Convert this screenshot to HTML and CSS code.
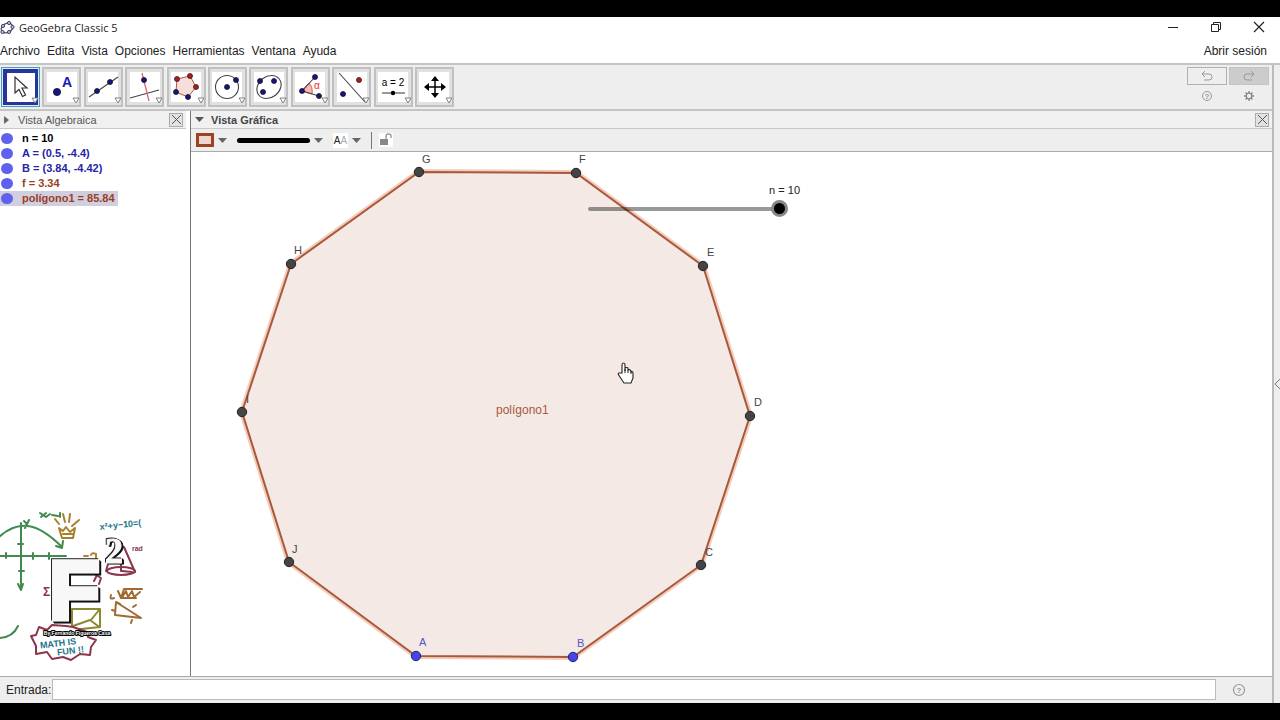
FILE: index.html
```html
<!DOCTYPE html>
<html lang="es">
<head>
<meta charset="utf-8">
<title>GeoGebra Classic 5</title>
<link rel="stylesheet" href="styles.css">
</head>
<body>
<div class="window">
  <header class="titlebar">
    <svg class="app-icon" width="16" height="16" viewBox="0 0 16 16"><ellipse cx="7" cy="8" rx="6" ry="4.600" transform="rotate(-25 7 8)" fill="none" stroke="#555" stroke-width="1.300"/><g fill="#b9b9ee" stroke="#336" stroke-width=".9"><circle cx="3" cy="6" r="1.600"/><circle cx="9" cy="3" r="1.600"/><circle cx="12.500" cy="7" r="1.600"/><circle cx="9" cy="12" r="1.600"/><circle cx="2.500" cy="12" r="1.600"/></g></svg>
    <h1 class="title">GeoGebra Classic 5</h1>
    <div class="window-controls">
      <button class="plain" aria-label="Minimizar"><svg width="12" height="12"><path d="M1 6.500h10" stroke="#222"/></svg></button>
      <button class="plain" aria-label="Restaurar"><svg width="12" height="12" fill="none" stroke="#222"><path d="M1.500 3.500h7v7h-7zM3.500 3.500v-2h7v7h-2"/></svg></button>
      <button class="plain" aria-label="Cerrar"><svg width="12" height="12"><path d="M1 1l10 10M11 1L1 11" stroke="#222" stroke-width="1.200"/></svg></button>
    </div>
  </header>
  <nav class="menubar">
    <button class="plain">Archivo</button><button class="plain">Edita</button><button class="plain">Vista</button><button class="plain">Opciones</button><button class="plain">Herramientas</button><button class="plain">Ventana</button><button class="plain">Ayuda</button>
    <button class="plain sign-in">Abrir sesión</button>
  </nav>
  <div class="workspace">
    <div class="app">
      <div class="toolbar">
        <div class="tools">
          <button class="tool selected" aria-label="Elige y mueve"><svg viewBox="0 0 39 40"><path d="M14 10v16l4-3.500 3.500 7 3-1.500-3.500-7h5z" fill="#fff" stroke="#333" stroke-width="1.200"/><path class="more" d="M31 31h6l-3 5z"/></svg></button>
          <button class="tool" aria-label="Punto"><svg viewBox="0 0 39 40"><circle class="pt" cx="15" cy="25" r="3.600"/><text x="25" y="20" class="tool-letter">A</text><path class="more" d="M31 31h6l-3 5z"/></svg></button>
          <button class="tool" aria-label="Recta"><svg viewBox="0 0 39 40"><path class="ln" d="M5 30L34 10"/><circle class="pt" cx="13" cy="24" r="2.500"/><circle class="pt" cx="26" cy="15" r="2.500"/><path class="more" d="M31 31h6l-3 5z"/></svg></button>
          <button class="tool" aria-label="Perpendicular"><svg viewBox="0 0 39 40"><path class="ln" d="M5 31L34 23"/><path d="M17 6l7 28" stroke="#d66" stroke-width="1.300"/><circle class="pt" cx="19" cy="13" r="2.500"/><path class="more" d="M31 31h6l-3 5z"/></svg></button>
          <button class="tool" aria-label="Polígono"><svg viewBox="0 0 39 40"><path d="M10 12l13-3 6 11-8 10-12-5z" fill="#f6dfda" stroke="#a55a43"/><g class="red"><circle cx="10" cy="12" r="2.500"/><circle cx="23" cy="9" r="2.500"/><circle cx="29" cy="20" r="2.500"/></g><circle class="pt" cx="21" cy="30" r="2.500"/><circle class="pt" cx="9" cy="25" r="2.500"/><path class="more" d="M31 31h6l-3 5z"/></svg></button>
          <button class="tool" aria-label="Circunferencia"><svg viewBox="0 0 39 40"><circle class="ln" cx="19" cy="20" r="11.500"/><circle class="pt" cx="19" cy="20" r="2.500"/><circle class="pt" cx="28" cy="13" r="2.500"/><path class="more" d="M31 31h6l-3 5z"/></svg></button>
          <button class="tool" aria-label="Elipse"><svg viewBox="0 0 39 40"><ellipse class="ln" cx="20" cy="20" rx="13" ry="10.500" transform="rotate(-38 20 20)"/><circle class="pt" cx="11" cy="14" r="2.500"/><circle class="pt" cx="25" cy="14" r="2.500"/><circle class="pt" cx="14" cy="25" r="2.500"/><path class="more" d="M31 31h6l-3 5z"/></svg></button>
          <button class="tool" aria-label="Ángulo"><svg viewBox="0 0 39 40"><path d="M11 24l7-8q4 4 3 11z" fill="#f8b8b8" stroke="#d55"/><path class="ln" d="M24 10L11 24l17 5"/><circle class="pt" cx="24" cy="10" r="2.500"/><circle class="pt" cx="11" cy="24" r="2.500"/><circle class="pt" cx="28" cy="29" r="2.500"/><text x="26" y="22" class="tool-angle">α</text><path class="more" d="M31 31h6l-3 5z"/></svg></button>
          <button class="tool" aria-label="Simetría"><svg viewBox="0 0 39 40"><path class="ln" d="M7 6l26 29"/><g class="red"><circle cx="27" cy="13" r="2.500"/></g><circle class="pt" cx="11" cy="27" r="2.500"/><path class="more" d="M31 31h6l-3 5z"/></svg></button>
          <button class="tool" aria-label="Deslizador"><svg viewBox="0 0 39 40"><text x="19" y="19" class="tool-value">a = 2</text><path class="ln" d="M8 26h23"/><circle cx="19" cy="26" r="2.200"/><path class="more" d="M31 31h6l-3 5z"/></svg></button>
          <button class="tool" aria-label="Desplaza vista gráfica"><svg viewBox="0 0 39 40"><path d="M20 12v16M12 20h16" stroke="#000" stroke-width="1.500"/><path d="M20 9l4 5h-8zM20 31l4-5h-8zM9 20l5-4v8zM31 20l-5-4v8z"/><path class="more" d="M31 31h6l-3 5z"/></svg></button>
        </div>
        <div class="actions">
          <button class="undo" aria-label="Deshace"><svg width="12" height="10"><path d="M4 0L1 3l3 3M1 3h7q3 0 3 3T8 9H3" fill="none" stroke="#999"/></svg></button>
          <button class="undo redo" aria-label="Rehace"><svg width="12" height="10"><path d="M8 0l3 3-3 3M11 3H4Q1 3 1 6t3 3h5" fill="none" stroke="#999"/></svg></button>
          <button class="plain" aria-label="Ayuda"><svg width="12" height="12"><circle cx="6" cy="6" r="4.500" fill="none" stroke="#999"/><text x="6" y="9" class="help-mark">?</text></svg></button>
          <button class="plain" aria-label="Configuración"><svg width="12" height="12" fill="none" stroke="#888"><circle cx="6" cy="6" r="2.800" stroke-width="1.300"/><path d="M6 1v2M6 9v2M1 6h2M9 6h2M2.500 2.500l1.500 1.500M8 8l1.500 1.500M9.500 2.500L8 4M4 8l-1.500 1.500" stroke-width="1.300"/></svg></button>
        </div>
      </div>
      <div class="views">
        <section class="algebra">
          <header class="view-header">
            <svg width="16" height="10"><path d="M4 1v8l5-4z" fill="#666"/></svg>
            <h2 class="view-title muted">Vista Algebraica</h2>
            <button class="close" aria-label="Cerrar"><svg width="11" height="11"><path d="M1 1l9 9M10 1l-9 9" stroke="#555"/></svg></button>
          </header>
          <ul class="objects">
            <li><span class="dot"></span><span class="value">n = 10</span></li>
            <li class="blue"><span class="dot"></span><span class="value">A = (0.5, -4.4)</span></li>
            <li class="blue"><span class="dot"></span><span class="value">B = (3.84, -4.42)</span></li>
            <li class="brown"><span class="dot"></span><span class="value">f = 3.34</span></li>
            <li class="brown current"><span class="dot"></span><span class="value">polígono1 = 85.84</span></li>
          </ul>
          <svg class="logo" width="146" height="152" viewBox="0 510 146 152" fill="none" stroke-linecap="round" stroke-linejoin="round">
            <g stroke="#438a50" stroke-width="2">
              <path d="M21 523v64M0 556h66M-1 537Q13 524 28 526T62 547M56 546l6 2 1-7M18 584l3 6 2-6M18 544h5M19 571h5M6 553v5M33 553v6M49 553v6M0 638q13-1 18-12M24 521l3 3 2-4M27 524l-2 4M40 513l6 4 4-3M46 513l-5 4M52 515l6 1M60 513v4"/>
            </g>
            <path d="M59 528l3 10h11l2-10-5 4-4-5-3 4zM63 534h10M55 519l4 5M63 514l2 8M70 514l-1 8M79 520l-7 6" stroke="#a7802e" stroke-width="2"/>
            <text x="100" y="530" transform="rotate(-6 100 530)" class="teal">x²+y−10=(</text>
            <path d="M108 564l-2 7M124 547l11 25M121 563v8M122 571l10 1" stroke="#8d354c" stroke-width="2"/>
            <ellipse cx="121" cy="571" rx="14" ry="4" stroke="#8d354c" stroke-width="2"/>
            <text x="132" y="551" class="scrawl-small maroon">rad</text>
            <text x="43" y="596" class="scrawl maroon">Σ</text>
            <path d="M84 556h4M91 555q1-3 5-1v4" stroke="#b8822c" stroke-width="2"/>
            <path d="M96 575l5 3-2 6M96 577l-2 4" stroke="#8d354c" stroke-width="2"/>
            <path d="M72 609h28v18l-28 3zM91 620l8-10M90 620l8 6M90 620l-17 6" stroke="#8c8831" stroke-width="2"/>
            <path d="M111 595q-2 5 3 3M118 591l3 7 3-9h18M123 596l3-5 2 6 4-6 2 6 6-5M122 598h14M116 602l-1 13 26 3zM116 602l4 2M112 610l3 1M132 620l-1 3M133 607l3-2" stroke="#a06a31" stroke-width="2"/>
            <path d="M52 625l-5 5-8-3-3 8-5 1 5 10 0 8 11-2 5 7 11-2 8 3 9-6 10 1 1-8 5-7-8-3-1-5-14-5-7-1z" fill="#fff" stroke="#8d354c" stroke-width="2"/>
            <g transform="rotate(-7 61 644)"><text x="40" y="646" class="teal">MATH IS</text><text x="56" y="655" class="teal">FUN !!</text></g>
            <text x="49" y="619" class="logo-f">F</text>
            <text x="105" y="563" class="logo-two">2</text>
            <text x="77" y="635" class="credit">By Fernando Figueroa Casa</text>
          </svg>
        </section>
        <section class="graphics">
          <header class="view-header">
            <svg width="18" height="10"><path d="M2 2h9L6.500 7z" fill="#555"/></svg>
            <h2 class="view-title">Vista Gráfica</h2>
            <button class="close" aria-label="Cerrar"><svg width="11" height="11"><path d="M1 1l9 9M10 1l-9 9" stroke="#555"/></svg></button>
          </header>
          <div class="stylebar">
            <button class="plain pair" aria-label="Color"><span class="swatch"></span><svg width="9" height="5"><path d="M0 0h9L4.500 5z" fill="#666"/></svg></button>
            <button class="plain pair" aria-label="Estilo de trazo"><span class="stroke"></span><svg width="9" height="5"><path d="M0 0h9L4.500 5z" fill="#666"/></svg></button>
            <button class="plain pair" aria-label="Tamaño de texto"><span class="letters">A<i>A</i></span><svg width="9" height="5"><path d="M0 0h9L4.500 5z" fill="#666"/></svg></button>
            <span class="divider"></span>
            <button class="plain lock" aria-label="Fijar objeto"><svg width="14" height="14"><path d="M1 6h8v6H1z" fill="#888"/><path d="M7 6V3q0-2 2.500-2T12 3v2" fill="none" stroke="#999" stroke-width="1.400"/></svg></button>
          </div>
          <div class="canvas">
            <svg class="drawing" role="img" aria-label="Polígono regular de diez lados">
              <g transform="translate(-191 -152)">
                <path class="halo" d="M419 172L576 173 703 266 750 416 701 565 573 657 416 656 289 562 242 412 291 264z"/>
                <path class="polygon" d="M419 172L576 173 703 266 750 416 701 565 573 657 416 656 289 562 242 412 291 264z"/>
                <g class="names">
                  <text x="422" y="163">G</text><text x="579" y="163">F</text><text x="707" y="256">E</text><text x="754" y="406">D</text><text x="705" y="556">C</text><text x="292" y="553">J</text><text x="246" y="403">I</text><text x="294" y="254">H</text>
                  <g class="blue"><text x="419" y="646">A</text><text x="577" y="647">B</text></g>
                </g>
                <text class="poly-name" x="496" y="414">polígono1</text>
                <g class="vertices">
                  <circle cx="419" cy="172" r="4.700"/><circle cx="576" cy="173" r="4.700"/><circle cx="703" cy="266" r="4.700"/><circle cx="750" cy="416" r="4.700"/><circle cx="701" cy="565" r="4.700"/><circle cx="289" cy="562" r="4.700"/><circle cx="242" cy="412" r="4.700"/><circle cx="291" cy="264" r="4.700"/>
                  <circle class="free" cx="573" cy="657" r="4.700"/><circle class="free" cx="416" cy="656" r="4.700"/>
                </g>
                <path d="M622 373V365q0-2 1.500-2t1.500 2v6-3q2-1 3 0v2q2-1 3 1v1q2-1 2 1v5l-2 5h-7l-4-6q-3-4-1-4z" fill="#fff" stroke="#222" stroke-width="1.100"/><path d="M628 370v3M631 371v3M625 369v4" stroke="#222"/>
              </g>
            </svg>
            <div class="slider">
              <label for="n">n = 10</label>
              <input id="n" type="range" min="3" max="10" value="10">
            </div>
          </div>
        </section>
      </div>
      <form class="inputbar">
        <label for="entry">Entrada:</label>
        <input id="entry" type="text" autocomplete="off">
        <button type="button" class="plain" aria-label="Ayuda de entrada"><svg width="14" height="14"><circle cx="7" cy="7" r="5.500" fill="none" stroke="#999" stroke-width="1.200"/><text x="7" y="10" class="help-mark">?</text></svg></button>
      </form>
    </div>
    <aside class="sidebar"><button class="plain" aria-label="Abrir panel"><svg width="6" height="12"><path d="M6 1L1 6l5 5" fill="none" stroke="#777"/></svg></button></aside>
  </div>
</div>
</body>
</html>
```
FILE: styles.css
```css
* { box-sizing: border-box; }
body {
  margin: 0;
  background: #000;
  color: #222;
  font: 12px/16px "Liberation Sans", Arial, sans-serif;
}
h1, h2, ul { margin: 0; padding: 0; }
button { font: inherit; color: inherit; }
svg { display: block; flex: none; }
.plain { padding: 0; border: 0; background: none; }

.window {
  display: flex;
  flex-direction: column;
  height: 100vh;
  border: solid #000;
  border-width: 17px 0;
  background: #fff;
  overflow: hidden;
}

.titlebar { display: flex; align-items: center; height: 22px; }
.app-icon { margin-right: 3px; }
.title { font: 11px/16px "Open Sans", "Noto Sans", sans-serif; }
.window-controls { display: flex; gap: 31px; margin: 0 15px 3px auto; }

.menubar { display: flex; align-items: center; gap: 7px; height: 24px; padding-right: 13px; }
.sign-in { margin-left: auto; }

.workspace { display: flex; flex: 1; min-height: 0; border-top: 2px solid #c4c4c4; background: #eee; }
.app { display: flex; flex: 1; flex-direction: column; min-width: 0; border-right: 2px solid #bbb; }
.sidebar { display: flex; align-items: center; justify-content: flex-end; width: 6px; }

.toolbar { display: flex; justify-content: space-between; padding: 2px 3px 2px 1px; border-bottom: 2px solid #c4c4c4; }
.tools { display: flex; justify-content: space-between; width: 453px; }
.tool {
  width: 39px;
  height: 40px;
  padding: 0;
  border: 2px solid #c0c0c0;
  background: linear-gradient(#fff, #fff) center / 30px 30px no-repeat #e1e1e1;
}
.tool svg { width: 39px; height: 40px; margin: -2px; }
.tool.selected { border: 1px solid #4a9fb8; background-color: #26349b; background-size: 28px 29px; box-shadow: inset 0 0 0 1px #d9edf8; }
.tool.selected svg { margin: -1px; }
.pt { fill: #15158a; stroke: #111; stroke-width: .8; }
.ln { fill: none; stroke: #444; stroke-width: 1.1; }
.red { fill: #a51f24; stroke: #411; stroke-width: .8; }
.more { fill: #fff; stroke: #777; stroke-width: .9; }
.tool-letter { font-size: 14px; font-weight: bold; text-anchor: middle; fill: #1818b8; }
.tool-angle { font-size: 10px; text-anchor: middle; fill: #d33; }
.tool-value { font-size: 10px; text-anchor: middle; }

.actions { display: grid; grid-template-columns: 40px 40px; grid-template-rows: 18px 18px; gap: 2px; align-content: start; }
.actions button { display: flex; align-items: center; justify-content: center; }
.undo { padding: 0; border: 1px solid #b0b0b0; background: #eee; }
.redo { border-color: #c4c4c4; background: #ccc; }
.help-mark { font-size: 8px; font-weight: bold; text-anchor: middle; fill: #999; }

.views { display: flex; flex: 1; min-height: 0; }
.algebra { display: flex; flex-direction: column; width: 190px; padding-right: 4px; background: #fff; }
.graphics { display: flex; flex: 1; flex-direction: column; min-width: 0; border-left: 1px solid #777; }
.view-header { display: flex; align-items: center; height: 18px; padding: 0 3px 0 2px; border-bottom: 1px solid #c8c8c8; background: #f0f0f0; }
.algebra .view-header { padding-left: 0; }
.view-title { font-size: 11px; line-height: 16px; color: #444; }
.muted { margin-left: 2px; font-weight: normal; color: #555; }
.close { display: flex; align-items: center; justify-content: center; width: 14px; height: 14px; margin-left: auto; padding: 0; border: 1px solid #aaa; background: #e2e2e2; }

.objects { padding-top: 2px; list-style: none; font-size: 11px; font-weight: bold; line-height: 15px; color: #000; }
.objects li { display: flex; align-items: center; gap: 9px; width: max-content; padding: 0 3px 0 1px; }
.dot { width: 12px; height: 11px; border-radius: 50%; background: #5f5ff0; }
.objects .blue { color: #2525a5; }
.objects .brown { color: #993f24; }
.objects .current { background: #d1cee0; }

.logo { margin-top: auto; margin-bottom: 14px; }
.scrawl { font-size: 12px; font-weight: bold; }
.teal { font-size: 9px; font-weight: bold; fill: #23728a; }
.maroon { fill: #8d354c; }
.scrawl-small { font-size: 7px; font-weight: bold; }
.logo-f, .logo-two { fill: #f8f8f8; stroke: #f8f8f8; font-weight: bold; stroke-linejoin: miter; }
.logo-f { font-size: 83px; stroke-width: 5; filter: drop-shadow(-1px -1px 0 #222) drop-shadow(2px 2px 0 #111); }
.logo-two { font: bold 36px "Liberation Serif", serif; stroke-width: 1; filter: drop-shadow(-1px -1px 0 #222) drop-shadow(2px 1px 0 #111); }
.credit { font-size: 5px; font-weight: bold; text-anchor: middle; fill: #fff; stroke: #000; stroke-width: 2; paint-order: stroke; }

.stylebar { display: flex; align-items: center; height: 23px; padding-left: 5px; border-bottom: 1px solid #aaa; }
.pair { display: flex; align-items: center; gap: 4px; margin-right: 10px; }
.swatch { width: 18px; height: 14px; border: 3px solid #9c4320; background: #edd6cc; }
.stroke { width: 73px; height: 5px; border-radius: 3px; background: #000; }
.letters { width: 15px; background: #fff; font-size: 10px; line-height: 15px; }
.letters i { font-style: normal; color: #aaa; }
.divider { width: 1px; height: 17px; margin-right: 7px; background: #777; }
.lock { background: #fff; }

.canvas { position: relative; flex: 1; min-height: 0; overflow: hidden; background: #fff; }
.drawing { width: 100%; height: 100%; }
.polygon { fill: #f4e9e4; stroke: #a8583b; stroke-width: 2; }
.halo { fill: none; stroke: #f3cdbb; stroke-width: 6; }
.names { font-size: 11px; fill: #444; }
.names .blue { fill: #5555cc; }
.poly-name { font-size: 12px; fill: #a9593d; }
.vertices { fill: #444; stroke: #222; stroke-width: 1; }
.vertices .free { fill: #4545e8; stroke: #22227a; }

.slider { position: absolute; left: 397px; top: 30px; display: flex; flex-direction: column; width: 200px; }
.slider label { align-self: flex-end; margin-right: -12px; font-size: 11px; }
.slider input { width: 200px; height: 22px; margin: 0; appearance: none; background: none; }
.slider input::-webkit-slider-runnable-track { height: 4px; border-radius: 2px; background: #0006; }
.slider input::-webkit-slider-thumb { width: 17px; height: 17px; margin-top: -7px; appearance: none; border: 3px solid #888; border-radius: 50%; background: #000; }

.inputbar { display: flex; align-items: center; height: 27px; padding: 0 0 1px 6px; border-top: 1px solid #aaa; }
.inputbar input { flex: 1; min-width: 0; height: 21px; margin: 0 16px 0 1px; padding: 0 4px; border: 1px solid #bbb; background: #fff; font: inherit; }
.inputbar .plain { margin-right: 26px; }
```
